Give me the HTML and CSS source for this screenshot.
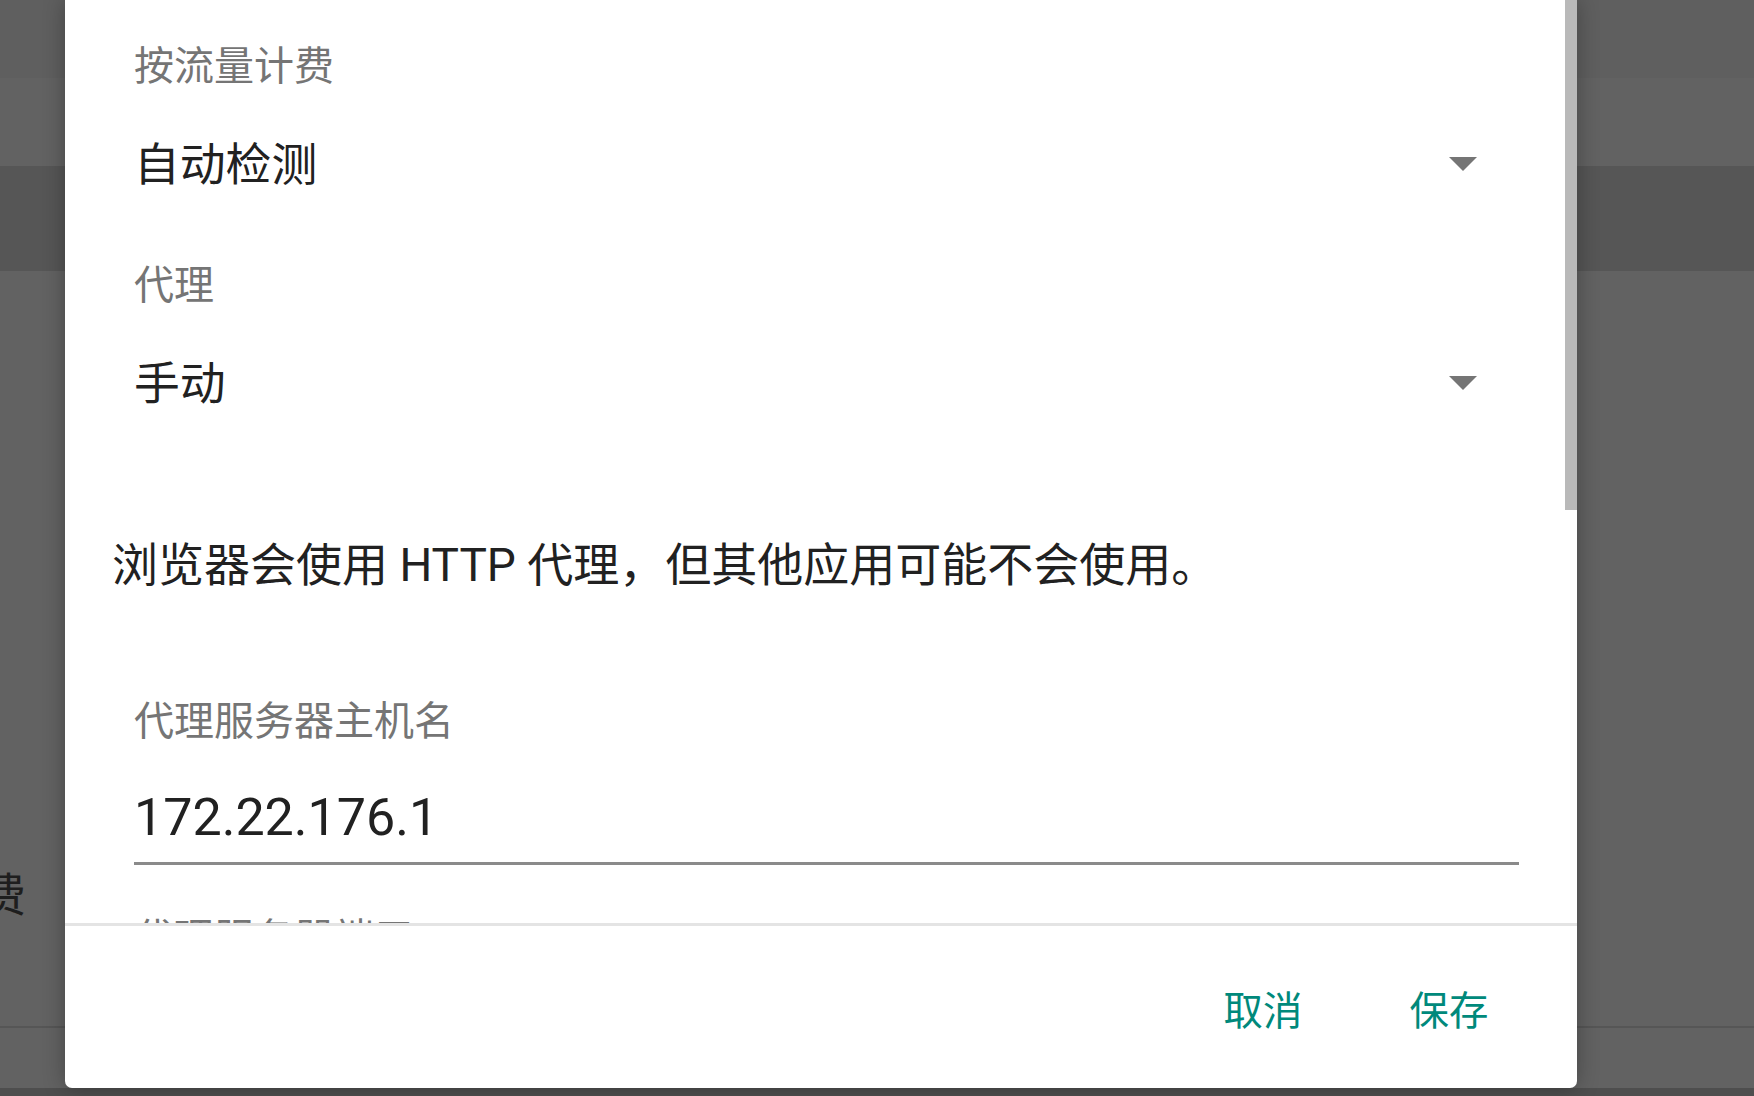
FILE: index.html
```html
<html>
<head>
    <title>代理设置</title>
    <meta name="viewport" content="width=device-width, initial-scale=1" />
    <link rel="stylesheet" href="styles.css">
</head>
<body>
<div class="app">
    <div class="app-bar"></div>
    <div class="app-row"></div>
    <div class="app-row app-row-selected"></div>
    <div class="app-spacer"></div>
    <div class="app-row app-row-text"><span class="app-title">按流量计费</span></div>
    <div class="app-row app-row-divided"></div>
    <div class="app-row app-row-last"></div>
    <div class="nav-bar"></div>
</div>

<div class="dialog">
    <div class="dialog-body">
        <div class="field-label">按流量计费</div>
        <div class="spinner">
            <span class="spinner-value">自动检测</span>
            <svg class="spinner-arrow" width="28" height="14" viewBox="0 0 28 14"><polygon points="0,0 28,0 14,14" /></svg>
        </div>

        <div class="field-label field-label-gap">代理</div>
        <div class="spinner">
            <span class="spinner-value">手动</span>
            <svg class="spinner-arrow" width="28" height="14" viewBox="0 0 28 14"><polygon points="0,0 28,0 14,14" /></svg>
        </div>

        <p class="note">浏览器会使用 HTTP 代理，但其他应用可能不会使用。</p>

        <div class="field-label field-label-top">代理服务器主机名</div>
        <div class="edit">172.22.176.1</div>

        <div class="field-label field-label-next">代理服务器端口</div>
    </div>
    <div class="dialog-actions">
        <button class="action">取消</button>
        <button class="action">保存</button>
    </div>
    <div class="scrollbar"></div>
</div>
</body>
</html>
```

FILE: styles.css
```css
body {
    margin: 0;
    width: 1754px;
    height: 1096px;
    overflow: hidden;
    font-family: Roboto, "Noto Sans CJK SC", sans-serif;
    background: #626262;
}

/* the settings screen behind the scrim */
.app {
    display: flex;
    flex-direction: column;
    height: 100%;
}

.app-bar {
    height: 78px;
    background: #5f5f5f;
}

.app-row {
    height: 88px;
    background: #626262;
}

.app-row-selected {
    height: 105px;
    background: #565656;
}

.app-spacer {
    flex: 1;
}

.app-row-text {
    height: 90px;
    line-height: 90px;
    overflow: hidden;
    white-space: nowrap;
}

.app-title {
    display: inline-block;
    margin-left: -204px;
    font-size: 46px;
    color: #1e1e1e;
}

.app-row-divided {
    height: 86px;
    border-bottom: 2px solid #565656;
}

.app-row-last {
    height: 60px;
}

.nav-bar {
    height: 8px;
    background: #4e4e4e;
}

/* dialog */
.dialog {
    position: absolute;
    left: 65px;
    top: 0;
    bottom: 8px;
    width: 1512px;
    display: flex;
    flex-direction: column;
    background: #fff;
    border-radius: 0 0 7px 7px;
    box-shadow: 0 0 22px rgba(0, 0, 0, 0.3);
}

.dialog-body {
    flex: 1;
    overflow: hidden;
    padding: 40px 58px 0 69px;
}

.field-label {
    height: 53px;
    line-height: 53px;
    font-size: 40px;
    color: #757575;
    white-space: nowrap;
}

.field-label-gap {
    margin-top: 52px;
}

.field-label-top {
    margin-top: 98px;
}

.field-label-next {
    margin-top: 47px;
}

.spinner {
    height: 86px;
    margin-top: 28px;
    display: flex;
    align-items: center;
    justify-content: space-between;
    padding-right: 42px;
}

.spinner-value {
    margin-bottom: 6px;
    font-size: 45.8px;
    color: #212121;
}

.spinner-arrow {
    fill: #757575;
}

.note {
    margin: 107px 0 0 -22px;
    height: 64px;
    line-height: 64px;
    font-size: 46px;
    color: #212121;
    white-space: nowrap;
}

.edit {
    margin-top: 38px;
    height: 64px;
    line-height: 64px;
    padding-bottom: 12px;
    border-bottom: 3px solid #8a8a8a;
    font-size: 52px;
    color: #212121;
}

.dialog-actions {
    height: 162px;
    border-top: 3px solid #e4e4e4;
    display: flex;
    align-items: center;
    justify-content: flex-end;
    gap: 6px;
    padding-right: 38px;
}

.action {
    min-width: 180px;
    height: 100px;
    padding: 0 45px;
    border: 0;
    background: none;
    font-family: Roboto, "Noto Sans CJK SC", sans-serif;
    font-size: 39.4px;
    color: #00897b;
}

.scrollbar {
    position: absolute;
    top: 0;
    right: 0;
    width: 12px;
    height: 510px;
    background: #b9b9b9;
}
```
